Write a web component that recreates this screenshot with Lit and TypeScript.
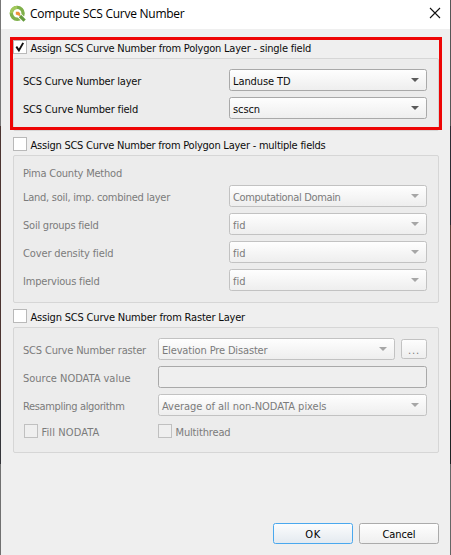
import { LitElement, html, css, nothing } from "lit";
import { customElement, property } from "lit/decorators.js";

/** Single-line caption whose tracking is adjusted so that it spans `span` pixels. */
@customElement("fit-text")
class FitText extends LitElement {
  @property() text = "";
  @property({ type: Number }) span = 0;

  static styles = css`
    :host { display: inline-block; white-space: pre; }
    .t { display: inline-block; }
  `;

  updated() {
    const el = this.renderRoot.querySelector(".t") as HTMLElement;
    el.style.letterSpacing = "0px";
    const natural = el.getBoundingClientRect().width;
    if (this.span && this.text.length > 1) {
      el.style.letterSpacing = (this.span - natural) / this.text.length + "px";
    }
  }

  render() {
    return html`<span class="t">${this.text}</span>`;
  }
}

@customElement("check-box")
class CheckBox extends LitElement {
  @property({ type: Boolean }) checked = false;
  @property({ type: Boolean }) disabled = false;
  @property() label = "";
  @property({ type: Number }) span = 0;

  static styles = css`
    :host { display: flex; align-items: center; height: 14px; }
    .box { box-sizing: border-box; width: 14px; height: 14px; border: 1px solid #b9b9b9; background: #fff; flex: none; }
    .off { background: #efefef; border-color: #c0c0c0; }
    svg { display: block; width: 12px; height: 12px; }
    fit-text { margin-left: 3.5px; padding-top: 4px; }
  `;

  render() {
    return html`
      <span class="box ${this.disabled ? "off" : ""}">
        ${this.checked
          ? html`<svg viewBox="0 0 12 12"><path d="M2.3 5.6 L4.9 9.4 L9.2 1.9" fill="none" stroke="#111" stroke-width="1.9"/></svg>`
          : nothing}
      </span>
      <fit-text .text=${this.label} .span=${this.span}></fit-text>`;
  }
}

@customElement("combo-box")
class ComboBox extends LitElement {
  @property() value = "";
  @property({ type: Number }) span = 0;
  @property({ type: Boolean }) disabled = false;

  static styles = css`
    :host { display: block; }
    .c { box-sizing: border-box; height: 22px; border: 1px solid #a9a9a9; border-radius: 2.5px;
      background: linear-gradient(#fefefe, #eeeeee); display: flex; align-items: center;
      justify-content: space-between; padding: 2px 7px 0 3px; }
    .off { border-color: #c2c2c2; }
    fit-text { padding-top: 2px; }
    svg { width: 8px; height: 4px; margin-top: -3px; fill: #5a5a5a; }
    .off svg { fill: #a6a6a6; }
  `;

  render() {
    return html`<div class="c ${this.disabled ? "off" : ""}">
      <fit-text .text=${this.value} .span=${this.span}></fit-text>
      <svg viewBox="0 0 8 4"><path d="M0 0H8L4 4Z"/></svg>
    </div>`;
  }
}

type Row = [label: string, labelSpan: number, value: string, valueSpan: number];

const SINGLE: Row[] = [
  ["SCS Curve Number layer", 118, "Landuse TD", 57.5],
  ["SCS Curve Number field", 115, "scscn", 27],
];
const MULTIPLE: Row[] = [
  ["Land, soil, imp. combined layer", 147, "Computational Domain", 107.5],
  ["Soil groups field", 75.5, "fid", 12.5],
  ["Cover density field", 90.5, "fid", 12.5],
  ["Impervious field", 76.5, "fid", 12.5],
];

@customElement("app-root")
class AppRoot extends LitElement {
  static styles = css`
    :host { display: block; width: 451px; height: 555px; overflow: hidden;
      font: 11px/14px "DejaVu Sans Condensed", "DejaVu Sans", sans-serif; font-stretch: condensed; color: #0c0c0c; }
    .desk { box-sizing: border-box; height: 555px; display: grid; grid-template-columns: 1px 449px 1px; }
    .left { background: linear-gradient(#777 0 126px, #4b3431 126px 400px, #34353a 400px 464px, #707070 464px); }
    .right { background: linear-gradient(#565656 0 126px, #2c2b33 126px 225px, #5d4036 225px 400px, #1e2224 400px 464px, #666 464px); }
    .window { position: relative; background: #efefef; display: flex; flex-direction: column; }
    .title { height: 29px; background: #fff; display: flex; align-items: center; padding: 0 9px 0 8px;
      font: 12px/16px "Open Sans", "Noto Sans", sans-serif; font-stretch: normal; color: #000; }
    .title .logo { width: 17px; height: 17px; margin-top: -2px; }
    .title fit-text { margin-left: 4px; margin-top: -1px; }
    .title .x { width: 12px; height: 12px; margin-left: auto; margin-top: -3px; }
    .body { flex: 1; display: flex; flex-direction: column; padding: 11px 11px 11px 12px; }
    .panel { box-sizing: border-box; border: 1px solid #d6d6d6; border-radius: 2px; background: #ececec;
      margin-top: 4px; padding: 10px 11px 0 9px; }
    .one { height: 73px; margin-bottom: 6px; }
    .two { height: 148px; margin-bottom: 6px; padding-top: 11px; }
    .three { height: 126px; }
    .grey { color: #7b7b7b; }
    .row { display: grid; grid-template-columns: 206px 198px; height: 28px; align-items: start; }
    .raster { grid-template-columns: 135px 1fr; }
    .label { padding-top: 6px; }
    .method { height: 18px; box-sizing: border-box; }
    .pick { display: grid; grid-template-columns: 237px 26px; column-gap: 6px; }
    .more { box-sizing: border-box; height: 20px; margin-top: 1px; border: 1px solid #c2c2c2; border-radius: 2.5px;
      background: linear-gradient(#fdfdfd, #eee); text-align: center; line-height: 21px; }
    .edit { box-sizing: border-box; height: 22px; border: 1px solid #a9a9a9; border-radius: 2.5px; background: #efefef; }
    .checks { display: grid; grid-template-columns: 134px 1fr; padding: 2px 0 0 1px; }
    .buttons { margin-top: auto; display: flex; justify-content: flex-end; gap: 6px; }
    .btn { box-sizing: border-box; width: 80px; height: 21px; border: 1px solid #ababab; border-radius: 2.5px;
      background: linear-gradient(#fefefe, #efefef); display: flex; align-items: center; justify-content: center; padding-top: 3px; color: #000; }
    .ok { border-color: #4aa8ee; background: linear-gradient(#fbfcfd, #e4eaf0); }
    .mark { position: absolute; left: 9px; top: 37px; width: 432px; height: 93px; box-sizing: border-box;
      border: 3px solid #ee0505; pointer-events: none; }
  `;

  row([label, labelSpan, value, valueSpan]: Row, disabled: boolean) {
    return html`<div class="row">
      <div class="label"><fit-text .text=${label} .span=${labelSpan}></fit-text></div>
      <combo-box .value=${value} .span=${valueSpan} .disabled=${disabled}></combo-box>
    </div>`;
  }

  render() {
    return html`<div class="desk">
      <div class="left"></div>
      <div class="window">
        <div class="title">
          <svg class="logo" viewBox="0 0 17 17">
            <circle cx="8.2" cy="8.3" r="5.9" fill="none" stroke="#7fb04a" stroke-width="3.4"/>
            <path d="M2.3 8.3A5.9 5.9 0 0 1 8.2 2.4" fill="none" stroke="#a3c95c" stroke-width="3.2"/>
            <path d="M10.2 10.2L15.8 15.9" stroke="#fff" stroke-width="5"/>
            <path d="M11 11L15.6 15.6" stroke="#649b3c" stroke-width="3.2"/>
            <path d="M6.8 6.7H9.6L11.2 8.3V11.2L6.8 9.6Z" fill="#ee913c"/>
          </svg>
          <fit-text .text=${"Compute SCS Curve Number"} .span=${154.5}></fit-text>
          <svg class="x" viewBox="0 0 12 12"><path d="M1 1L11 11M11 1L1 11" stroke="#111" stroke-width="1.1"/></svg>
        </div>
        <div class="body">
          <check-box checked .label=${"Assign SCS Curve Number from Polygon Layer - single field"} .span=${280.5}></check-box>
          <div class="panel one">${SINGLE.map((r) => this.row(r, false))}</div>

          <check-box .label=${"Assign SCS Curve Number from Polygon Layer - multiple fields"} .span=${295}></check-box>
          <div class="panel two grey">
            <div class="method"><fit-text .text=${"Pima County Method"} .span=${99}></fit-text></div>
            ${MULTIPLE.map((r) => this.row(r, true))}
          </div>

          <check-box .label=${"Assign SCS Curve Number from Raster Layer"} .span=${214.5}></check-box>
          <div class="panel three grey">
            <div class="row raster">
              <div class="label"><fit-text .text=${"SCS Curve Number raster"} .span=${123}></fit-text></div>
              <div class="pick">
                <combo-box disabled .value=${"Elevation Pre Disaster"} .span=${105.5}></combo-box>
                <div class="more"><fit-text .text=${"..."} .span=${12}></fit-text></div>
              </div>
            </div>
            <div class="row raster">
              <div class="label"><fit-text .text=${"Source NODATA value"} .span=${107.5}></fit-text></div>
              <div class="edit"></div>
            </div>
            <div class="row raster">
              <div class="label"><fit-text .text=${"Resampling algorithm"} .span=${101.5}></fit-text></div>
              <combo-box disabled .value=${"Average of all non-NODATA pixels"} .span=${164.5}></combo-box>
            </div>
            <div class="checks">
              <check-box disabled .label=${"Fill NODATA"} .span=${58}></check-box>
              <check-box disabled .label=${"Multithread"} .span=${55}></check-box>
            </div>
          </div>

          <div class="buttons">
            <div class="btn ok"><fit-text .text=${"OK"} .span=${15.5}></fit-text></div>
            <div class="btn"><fit-text .text=${"Cancel"} .span=${33}></fit-text></div>
          </div>
        </div>
        <div class="mark"></div>
      </div>
      <div class="right"></div>
    </div>`;
  }
}
